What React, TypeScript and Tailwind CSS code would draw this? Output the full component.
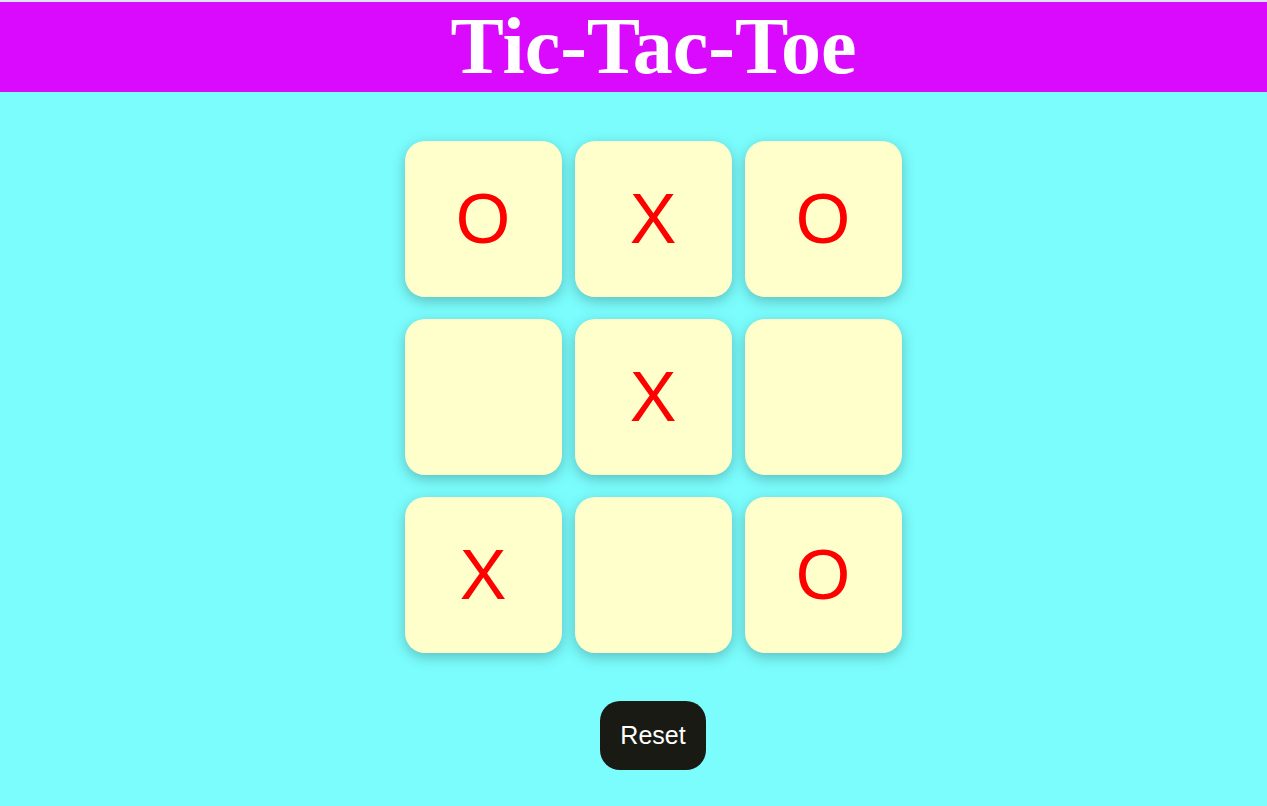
import { useState } from 'react'

const initial = ['O', 'X', 'O', '', 'X', '', 'X', '', 'O']

export default function App() {
  const [cells, setCells] = useState<string[]>(initial)
  const [turn, setTurn] = useState('X')

  const play = (i: number) => {
    if (cells[i]) return
    const next = [...cells]
    next[i] = turn
    setCells(next)
    setTurn(turn === 'X' ? 'O' : 'X')
  }

  return (
    <div className="min-h-[806px] bg-[#7bfdfd] flex flex-col">
      <div className="h-[2px] bg-[#dbe4f0]" />
      {/* Title */}
      <header className="h-[90px] bg-[#da0aff] flex items-center justify-center pl-[40px]">
        <h1 className="text-white font-bold text-[80px] leading-none font-['Liberation_Serif',serif] -mt-[2px]">
          Tic-Tac-Toe
        </h1>
      </header>

      {/* Board */}
      <div className="flex justify-center pt-[49px] pl-[39px]">
        <div className="grid grid-cols-[157px_157px_157px] gap-x-[13px] gap-y-[22px]">
          {cells.map((c, i) => (
            <button
              key={i}
              onClick={() => play(i)}
              className="w-[157px] h-[156px] rounded-[20px] bg-[#ffffcc] shadow-[0_4px_14px_rgba(0,0,0,0.25)] flex items-center justify-center text-[#ff0000] text-[70px] font-['Liberation_Sans',sans-serif] leading-none"
            >
              {c}
            </button>
          ))}
        </div>
      </div>

      {/* Reset */}
      <div className="flex justify-center pt-[48px] pl-[39px]">
        <button
          onClick={() => {
            setCells(Array(9).fill(''))
            setTurn('X')
          }}
          className="w-[106px] h-[69px] rounded-[20px] bg-[#1a1a14] text-white text-[25px] font-['Liberation_Sans',sans-serif]"
        >
          Reset
        </button>
      </div>
    </div>
  )
}
